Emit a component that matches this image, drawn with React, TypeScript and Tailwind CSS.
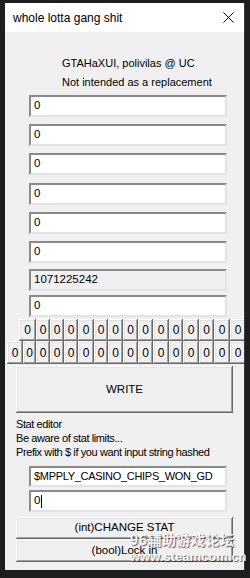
import React from "react";

const FONT = "font-['Liberation_Sans',Arial,sans-serif]";
const sunken =
  "border-2 border-t-[#8a8a8a] border-l-[#8a8a8a] border-b-[#e3e3e3] border-r-[#e3e3e3]";
const raised =
  "shadow-[inset_-1px_-1px_0_#696969,inset_1px_1px_0_#ffffff,inset_-2px_-2px_0_#a0a0a0,inset_2px_2px_0_#e3e3e3] bg-[#f0f0f0]";

function Field({ value, mt, gray = false, h = 22, caret = false, tight = false }: { value: string; mt: number; gray?: boolean; h?: number; caret?: boolean; tight?: boolean }) {
  return (
    <div
      className={`ml-[24px] w-[198px] ${sunken} ${gray ? "bg-[#f0f0f0]" : "bg-white"} flex items-center pl-[3px] ${tight ? "text-[11px] tracking-[-0.3px]" : "text-[11.5px]"} text-black whitespace-nowrap overflow-hidden`}
      style={{ marginTop: mt, height: h }}
    >
      <span>{value}</span>
      {caret && <span className="inline-block w-px h-[13px] bg-black ml-[1px]" />}
    </div>
  );
}

const row1 = [19, 36, 50, 64, 78, 94, 108, 123, 138, 153, 169, 183, 199, 214, 230, 246];
const row2 = [7, 23, 36, 50, 64, 78, 94, 108, 123, 138, 153, 169, 183, 199, 214, 230, 246];

function ByteRow({ edges, h }: { edges: number[]; h: number }) {
  const items = [];
  for (let i = 0; i < edges.length - 1; i++) {
    items.push(
      <div
        key={i}
        className={`${raised} flex items-center justify-center text-[12px] text-black shrink-0`}
        style={{ width: edges[i + 1] - edges[i], height: h }}
      >
        0
      </div>
    );
  }
  return (
    <div className="flex" style={{ marginLeft: edges[0] - 5 }}>
      {items}
    </div>
  );
}

export default function App() {
  return (
    <div className={`relative w-[250px] h-[578px] bg-[#1e1e1e] overflow-hidden ${FONT}`}>
      <div className="absolute left-[244px] top-[3px] w-px h-[567px] bg-[#3a3a3a]" />
      <div className="pt-[3px] pl-[5px]">
        <div className="w-[239px] h-[567px] flex flex-col overflow-hidden">
          <div className="h-[29px] bg-white flex items-center justify-between pl-[8px] pr-[10px] shrink-0">
            <span className="text-[12px] text-black">whole lotta gang shit</span>
            <svg width="11" height="11" viewBox="0 0 11 11">
              <path d="M0.5 0.5 L10.5 10.5 M10.5 0.5 L0.5 10.5" stroke="#000" strokeWidth="1" />
            </svg>
          </div>
          <div className="flex-1 bg-[#f0f0f0] flex flex-col overflow-hidden">
            <div className="mt-[22px] pl-[57px] text-[11px] leading-[19px] text-black whitespace-nowrap">
              <div>GTAHaXUI, polivilas @ UC</div>
              <div>Not intended as a replacement</div>
            </div>
            <Field value="0" mt={3} />
            <Field value="0" mt={7} />
            <Field value="0" mt={7} />
            <Field value="0" mt={8} />
            <Field value="0" mt={7} />
            <Field value="0" mt={7} />
            <Field value="1071225242" mt={6} gray />
            <Field value="0" mt={4} />
            <div className="mt-[2px]">
              <ByteRow edges={row1} h={22} />
              <ByteRow edges={row2} h={23} />
            </div>
            <button
              className={`${raised} ml-[11px] mt-[2px] w-[217px] h-[47px] text-[11.5px] text-black flex items-center justify-center`}
            >
              WRITE
            </button>
            <div className="mt-[4px] pl-[11px] text-[11px] leading-[14px] tracking-[-0.4px] text-black whitespace-nowrap">
              <div>Stat editor</div>
              <div>Be aware of stat limits...</div>
              <div>Prefix with $ if you want input string hashed</div>
            </div>
            <Field value="$MPPLY_CASINO_CHIPS_WON_GD" mt={7} h={21} tight />
            <Field value="0" mt={3} caret />
            <button
              className={`${raised} ml-[11px] mt-[5px] w-[217px] h-[22px] text-[11.5px] text-black flex items-center justify-center`}
            >
              (int)CHANGE STAT
            </button>
            <button
              className={`${raised} ml-[11px] mt-[1px] w-[217px] h-[22px] text-[11.5px] text-black flex items-center justify-center`}
            >
              (bool)Lock in
            </button>
          </div>
        </div>
      </div>
      <div className="absolute left-[130px] top-[532px] flex flex-col leading-none text-white/90 font-bold [text-shadow:1px_1px_1px_rgba(0,0,0,0.6)]">
        <span className="text-[14px] tracking-[0.5px] font-['Noto_Sans_CJK_SC',sans-serif]">96辅助游戏论坛</span>
        <span className="text-[13px] mt-[4px] font-['Liberation_Sans',Arial,sans-serif]">www.steamcom.cn</span>
      </div>
    </div>
  );
}
